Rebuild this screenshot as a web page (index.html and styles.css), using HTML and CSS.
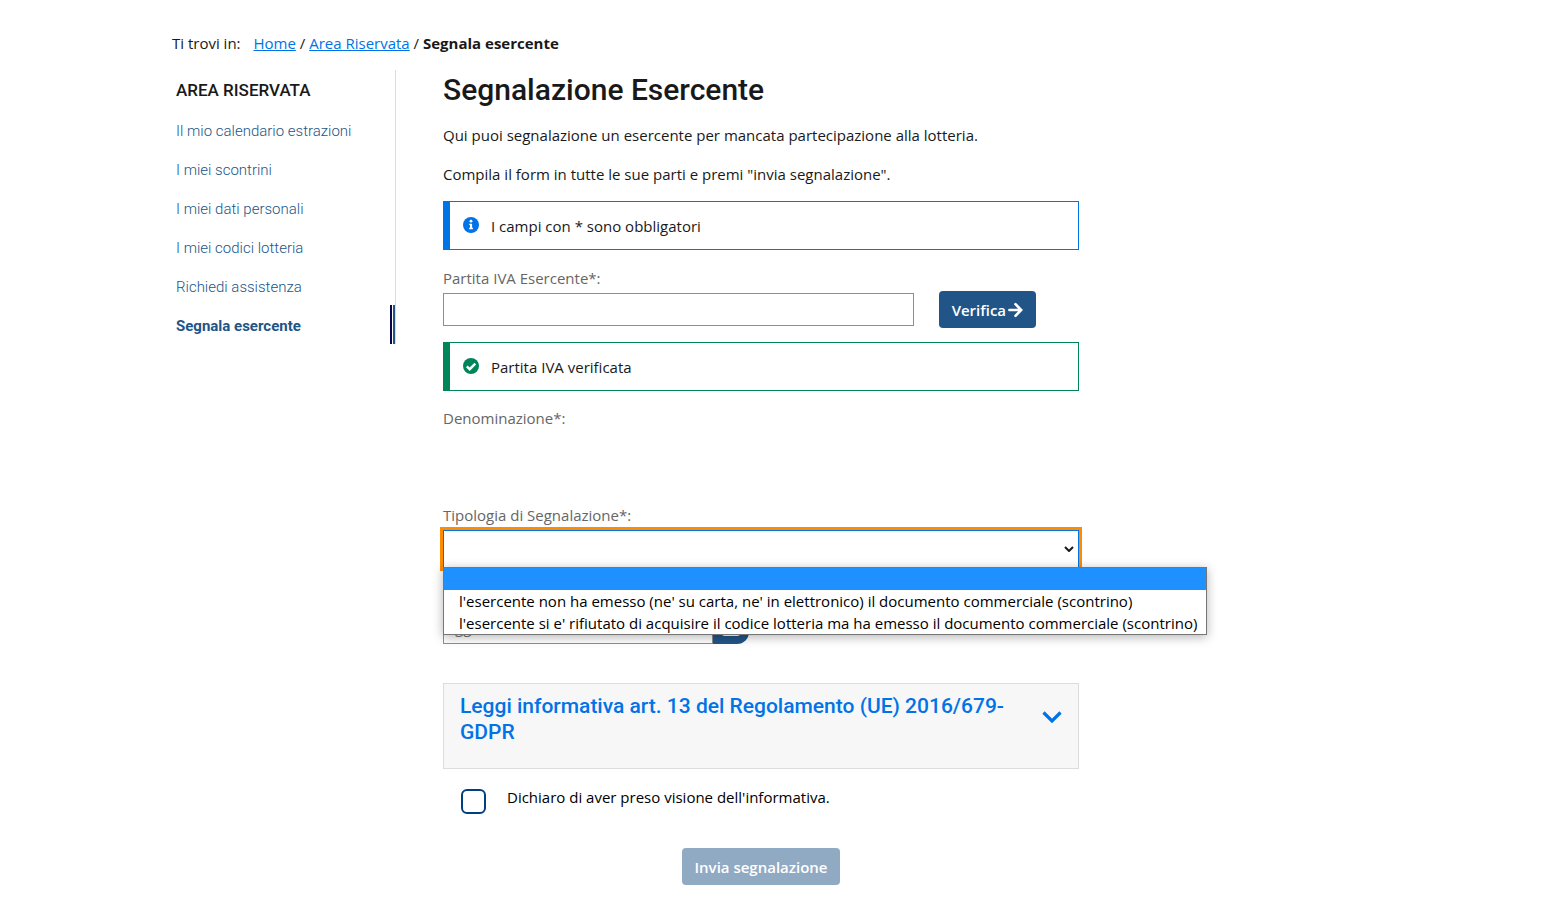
FILE: index.html
```html
<!DOCTYPE html>
<html lang="it">
<head>
    <meta charset="UTF-8">
    <meta name="viewport" content="width=device-width, initial-scale=1.0">
    <title>Segnala esercente</title>
    <link rel="stylesheet" href="styles.css">
</head>
<body>
<div class="container">
    <nav class="breadcrumb">
        <span class="breadcrumb-label">Ti trovi in:</span>
        <a href="#">Home</a> / <a href="#">Area Riservata</a> / <strong>Segnala esercente</strong>
    </nav>

    <div class="layout">
        <aside class="sidebar">
            <h2>AREA RISERVATA</h2>
            <ul>
                <li><a href="#">Il mio calendario estrazioni</a></li>
                <li><a href="#">I miei scontrini</a></li>
                <li><a href="#">I miei dati personali</a></li>
                <li><a href="#">I miei codici lotteria</a></li>
                <li><a href="#">Richiedi assistenza</a></li>
                <li><a href="#" class="active">Segnala esercente</a></li>
            </ul>
        </aside>

        <main>
            <h1>Segnalazione Esercente</h1>
            <p>Qui puoi segnalazione un esercente per mancata partecipazione alla lotteria.</p>
            <p>Compila il form in tutte le sue parti e premi "invia segnalazione".</p>

            <form>
                <div class="alert alert-info">
                    <svg class="alert-icon" viewBox="0 0 16 16">
                        <circle cx="8" cy="8" r="8" fill="currentColor"/>
                        <circle cx="8" cy="4.2" r="1.4" fill="#fff"/>
                        <path d="M6.2 6.7h2.9v4.1h.8v1.4H6.2v-1.4H7V8.1h-.8z" fill="#fff"/>
                    </svg>
                    <span>I campi con * sono obbligatori</span>
                </div>

                <label for="piva">Partita IVA Esercente*:</label>
                <div class="verify-row">
                    <input type="text" id="piva" name="piva">
                    <button type="button" class="btn">Verifica
                        <svg class="arrow" viewBox="0 0 16 16">
                            <path d="M1.5 8h12M8 1.800L14 8l-6 6.200" fill="none" stroke="currentColor" stroke-width="2.800" stroke-linecap="round"/>
                        </svg>
                    </button>
                </div>

                <div class="alert alert-success">
                    <svg class="alert-icon" viewBox="0 0 16 16">
                        <circle cx="8" cy="8" r="8" fill="currentColor"/>
                        <path d="M3.8 8.3l2.9 2.9 5.6-5.600" fill="none" stroke="#fff" stroke-width="2.4"/>
                    </svg>
                    <span>Partita IVA verificata</span>
                </div>

                <div class="denominazione">Denominazione*:</div>

                <label for="tipologia">Tipologia di Segnalazione*:</label>
                <div class="select-wrap">
                    <select id="tipologia" name="tipologia">
                        <option value=""></option>
                    </select>
                    <svg class="select-arrow" viewBox="0 0 10 6">
                        <path d="M1 1l4 4 4-4" fill="none" stroke="currentColor" stroke-width="2"/>
                    </svg>
                    <ul class="dropdown" role="listbox">
                        <li class="selected" role="option"></li>
                        <li role="option">l'esercente non ha emesso (ne' su carta, ne' in elettronico) il documento commerciale (scontrino)</li>
                        <li role="option">l'esercente si e' rifiutato di acquisire il codice lotteria ma ha emesso il documento commerciale (scontrino)</li>
                    </ul>
                </div>

                <div class="date-row">
                    <input type="text" id="data" name="data" placeholder="gg/mm/aaaa" aria-label="Data">
                    <button type="button" class="date-btn" aria-label="Apri calendario">
                        <svg viewBox="0 0 16 18">
                            <path d="M4 0h2v2h4V0h2v2h2a2 2 0 0 1 2 2v12a2 2 0 0 1-2 2H2a2 2 0 0 1-2-2V4a2 2 0 0 1 2-2h2z" fill="#fff"/>
                            <path d="M1 6h14" stroke="#225587"/>
                        </svg>
                    </button>
                </div>

                <button type="button" class="accordion">
                    <span>Leggi informativa art. 13 del Regolamento (UE) 2016/679-GDPR</span>
                    <svg class="chevron" viewBox="0 0 20 12">
                        <path d="M1.5 1.5L10 10l8.500-8.500" fill="none" stroke="currentColor" stroke-width="3.200"/>
                    </svg>
                </button>

                <div class="consent">
                    <input type="checkbox" id="consenso" name="consenso">
                    <label for="consenso">Dichiaro di aver preso visione dell'informativa.</label>
                </div>

                <div class="actions">
                    <button type="submit" class="btn" disabled>Invia segnalazione</button>
                </div>
            </form>
        </main>
    </div>
</div>
</body>
</html>
```
FILE: styles.css
```css
* {
    box-sizing: border-box;
}

body {
    margin: 0;
    font-family: "Open Sans", "Noto Sans", sans-serif;
    font-size: 15px;
    line-height: 24px;
    color: #19191a;
    background-color: #fff;
}

.container {
    max-width: 1201px;
    margin: 0 auto;
    padding-top: 31px;
}

.breadcrumb a {
    color: #0073e6;
}

.breadcrumb-label {
    margin-right: 9px;
}

.layout {
    display: grid;
    grid-template-columns: 224px minmax(0, 636px);
    column-gap: 47px;
    align-items: start;
    margin-top: 15px;
}

/* sidebar */
.sidebar {
    border-right: 1px solid #dcdcde;
    font-family: Roboto, sans-serif;
}

.sidebar h2 {
    margin: 0;
    padding-left: 4px;
    font-size: 17px;
    font-weight: 500;
    line-height: 40px;
}

.sidebar ul {
    list-style: none;
    margin: 0;
    padding: 0;
}

.sidebar a {
    display: block;
    padding: 3px 0 0 4px;
    font-size: 15px;
    font-weight: 300;
    line-height: 36px;
    color: #225587;
    text-decoration: none;
}

.sidebar a.active {
    font-weight: 700;
    border-right: 2px solid #225587;
    background: linear-gradient(#06064f, #06064f) no-repeat right 1px top / 2px 100%;
}

/* content */
h1 {
    margin: 0 0 13px;
    font-family: Roboto, sans-serif;
    font-size: 30px;
    font-weight: 500;
    line-height: 40px;
}

p {
    margin: 0 0 15px;
}

label,
.denominazione {
    display: block;
    color: #666;
}

.alert {
    display: flex;
    align-items: center;
    gap: 12px;
    height: 49px;
    margin-bottom: 16px;
    padding-left: 13px;
    border: 1px solid;
    border-left-width: 7px;
}

.alert span {
    color: #19191a;
}

.alert-icon {
    width: 16px;
    height: 16px;
    margin-bottom: 2px;
}

.alert-info {
    color: #0073e6;
}

.alert-success {
    margin-bottom: 15px;
    color: #00855a;
}

.verify-row {
    display: flex;
    align-items: center;
    margin: 1px 0 14px;
}

input[type="text"] {
    font: inherit;
    border: 1px solid #8e8e90;
    border-radius: 0;
    background-color: #fff;
}

.verify-row input {
    width: 74%;
    height: 33px;
    margin-right: 25px;
}

.btn {
    display: inline-flex;
    align-items: center;
    gap: 2px;
    height: 37px;
    padding: 0 13px;
    border: none;
    border-radius: 4px;
    font: inherit;
    font-weight: 600;
    white-space: nowrap;
    color: #fff;
    background-color: #225587;
}

.btn:disabled {
    background-color: #91aac3;
}

.arrow {
    width: 15px;
    height: 16px;
}

.denominazione {
    min-height: 97px;
}

.select-wrap {
    position: relative;
    margin: 3px 0 39px;
}

select {
    display: block;
    width: 100%;
    height: 38px;
    border: 1px solid #0073e6;
    border-radius: 0;
    outline: 3px solid #ff8c00;
    background-color: #fff;
    appearance: none;
}

.select-arrow {
    position: absolute;
    right: 5px;
    top: 16px;
    width: 10px;
    height: 6px;
}

.dropdown {
    position: absolute;
    top: 37px;
    left: 0;
    z-index: 1;
    margin: 0;
    padding: 0;
    list-style: none;
    line-height: 22px;
    white-space: nowrap;
    color: #000;
    border: 1px solid #767676;
    background-color: #fff;
    box-shadow: 0 2px 10px rgba(0, 0, 0, 0.3);
}

.dropdown li {
    height: 22px;
    padding: 0 9px 0 15px;
}

.dropdown .selected {
    background-color: #1e90ff;
}

.date-row {
    display: flex;
    margin-bottom: 39px;
}

.date-row input {
    width: 270px;
    height: 37px;
    padding: 3px 11px 0;
}

.date-btn {
    display: flex;
    align-items: center;
    justify-content: center;
    width: 36px;
    height: 37px;
    padding: 0;
    border: none;
    border-radius: 0 0 12px 0;
    background-color: #225587;
}

.date-btn svg {
    width: 18px;
    height: 20px;
}

.accordion {
    display: flex;
    align-items: flex-start;
    justify-content: space-between;
    width: 100%;
    min-height: 86px;
    padding: 9px 16px;
    border: 1px solid #dcdcde;
    font-family: Roboto, sans-serif;
    font-size: 21px;
    font-weight: 500;
    line-height: 26px;
    text-align: left;
    color: #0073e6;
    background-color: #f7f7f7;
}

.accordion span {
    max-width: 570px;
}

.chevron {
    flex: none;
    width: 20px;
    height: 12px;
    margin-top: 18px;
}

.consent {
    display: flex;
    gap: 21px;
    margin: 16px 0 34px;
    padding-left: 18px;
}

.consent input {
    width: 25px;
    height: 25px;
    margin: 4px 0 0;
    border: 2px solid #003f80;
    border-radius: 6px;
    appearance: none;
}

.consent label {
    color: #000;
}

.actions {
    display: flex;
    justify-content: center;
}
```
